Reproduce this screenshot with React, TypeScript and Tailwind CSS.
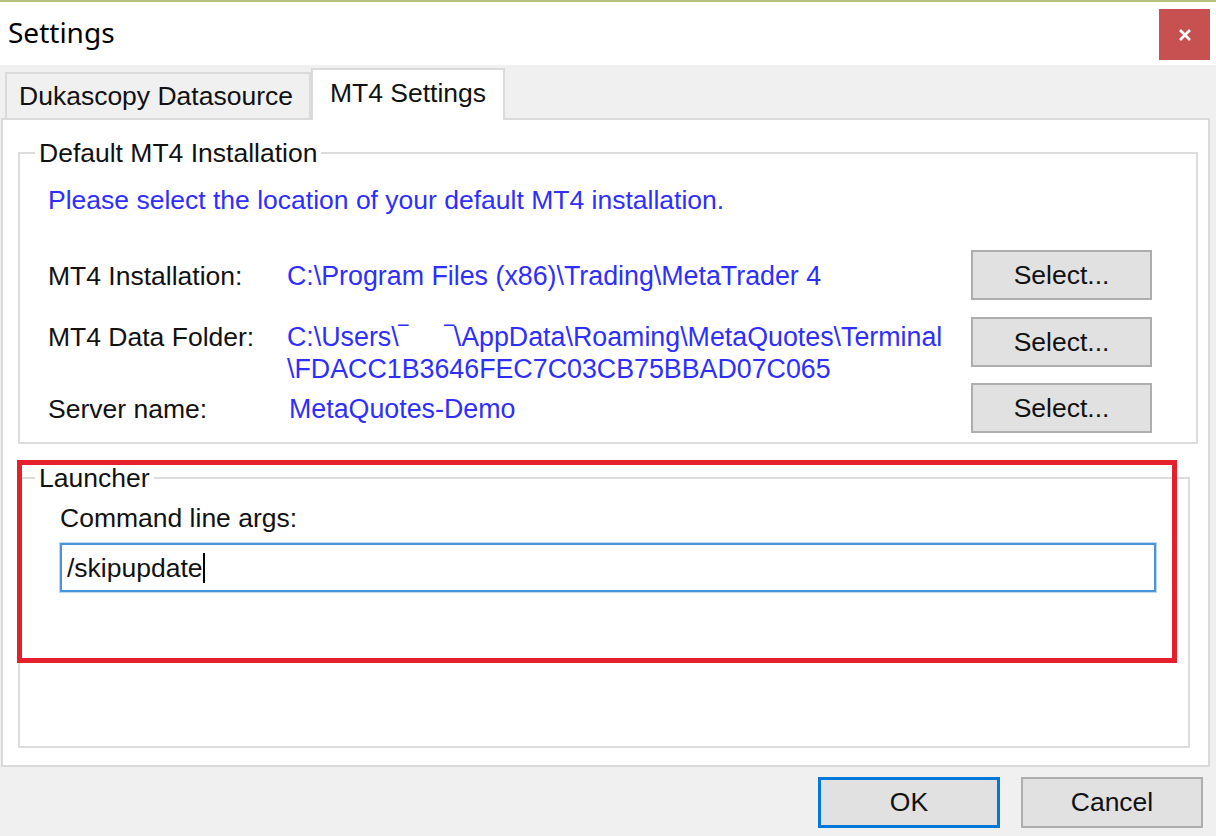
import React from 'react';

const paths = {
  install: 'C:\\Program Files (x86)\\Trading\\MetaTrader 4',
  data1: 'C:\\Users\\\u203e\u00a0\u00a0\u00a0\u00a0\u00a0\u203e\\AppData\\Roaming\\MetaQuotes\\Terminal',
  data2: '\\FDACC1B3646FEC7C03CB75BBAD07C065',
  server: 'MetaQuotes-Demo',
};

function WinButton({ label, primary }: { label: string; primary?: boolean }) {
  return (
    <button
      className={
        primary
          ? 'w-[182px] h-[51px] bg-[#e1e1e1] border-[3px] border-[#0078d7] text-[26.5px] leading-none text-[#111]'
          : 'w-[182px] h-[51px] bg-[#e1e1e1] border-2 border-[#adadad] text-[26.5px] leading-none text-[#111]'
      }
    >
      {label}
    </button>
  );
}

function SelectButton() {
  return (
    <button className="w-[181px] h-[50px] shrink-0 bg-[#e1e1e1] border-2 border-[#adadad] text-[26.5px] leading-none text-[#111]">
      Select...
    </button>
  );
}

export default function App() {
  return (
    <div className="relative w-[1216px] h-[836px] overflow-hidden bg-[#f0f0f0] font-['Liberation_Sans',Arial,sans-serif] text-[#111]">
      {/* title bar */}
      <div className="h-[65px] bg-white border-t-2 border-[#b5c27a] flex items-start justify-between">
        <span className="pl-[8px] pt-[14px] text-[28px] leading-[32px] font-['Noto_Sans',sans-serif] text-black">Settings</span>
        <button className="mt-[7px] mr-[6px] w-[51px] h-[51px] bg-[#c75050] flex items-center justify-center">
          <svg width="14" height="14" viewBox="0 0 14 14">
            <path d="M2 2 L12 12 M12 2 L2 12" stroke="white" strokeWidth="2.6" />
          </svg>
        </button>
      </div>

      {/* tabs */}
      <div className="h-[53px] flex items-end pl-[5px]">
        <div className="w-[306px] h-[46px] bg-[#f0f0f0] border-2 border-b-0 border-[#dadada] flex items-center justify-center pr-[4px] text-[26.5px] leading-[32px]">
          Dukascopy Datasource
        </div>
        <div className="relative z-10 -mb-[2px] w-[194px] h-[52px] bg-white border-2 border-b-0 border-[#dadada] flex items-center justify-center pb-[4px] text-[26.5px] leading-[32px]">
          MT4 Settings
        </div>
      </div>

      {/* tab page */}
      <div className="ml-[1px] w-[1209px] h-[649px] bg-white border-2 border-[#dadada] pl-[15px] pt-[19px]">
        <fieldset className="w-[1180px] h-[305px] border-2 border-[#dcdcdc] pl-[28px]">
          <legend className="ml-[-13px] px-[4px] text-[26.5px] leading-[28px]">Default MT4 Installation</legend>
          <div className="pt-[17px] text-[26.5px] leading-[32px] text-[#2e2eff]">
            Please select the location of your default MT4 installation.
          </div>

          <div className="mt-[34px] flex items-start h-[50px]">
            <div className="w-[239px] pt-[10px] text-[26.5px] leading-[32px]">MT4 Installation:</div>
            <div className="w-[684px] pt-[10px] text-[26.8px] leading-[32px] text-[#2e2eff]">{paths.install}</div>
            <SelectButton />
          </div>

          <div className="mt-[17px] flex items-start h-[66px]">
            <div className="w-[239px] pt-[4px] text-[26.5px] leading-[32px]">MT4 Data Folder:</div>
            <div className="w-[684px] pt-[4px] text-[26.8px] leading-[32px] text-[#2e2eff] whitespace-nowrap">
              <div>{paths.data1}</div>
              <div>{paths.data2}</div>
            </div>
            <SelectButton />
          </div>

          <div className="flex items-start h-[50px]">
            <div className="w-[239px] pt-[10px] text-[26.5px] leading-[32px]">Server name:</div>
            <div className="w-[684px] pt-[10px] pl-[2px] text-[26.8px] leading-[32px] text-[#2e2eff]">{paths.server}</div>
            <SelectButton />
          </div>
        </fieldset>

        <fieldset className="mt-[20px] w-[1172px] h-[284px] border-2 border-[#dcdcdc] pl-[40px]">
          <legend className="ml-[-25px] px-[4px] text-[26.5px] leading-[28px]">Launcher</legend>
          <div className="pt-[10px] text-[26.5px] leading-[32px]">Command line args:</div>
          <div className="mt-[9px] w-[1096px] h-[49px] border-2 border-[#4a94dc] shadow-[0_0_0_1px_#bcd8f2] flex items-center pl-[5px] text-[26.5px] leading-[32px]">
            /skipupdate
            <span className="inline-block w-[2px] h-[30px] bg-black" />
          </div>
        </fieldset>
      </div>

      {/* dialog buttons */}
      <div className="flex justify-end gap-[21px] pr-[13px] pt-[10px]">
        <WinButton label="OK" primary />
        <WinButton label="Cancel" />
      </div>

      {/* annotation */}
      <div className="absolute left-[17px] top-[460px] w-[1160px] h-[203px] border-[5px] border-[#e4202c] pointer-events-none" />
    </div>
  );
}
